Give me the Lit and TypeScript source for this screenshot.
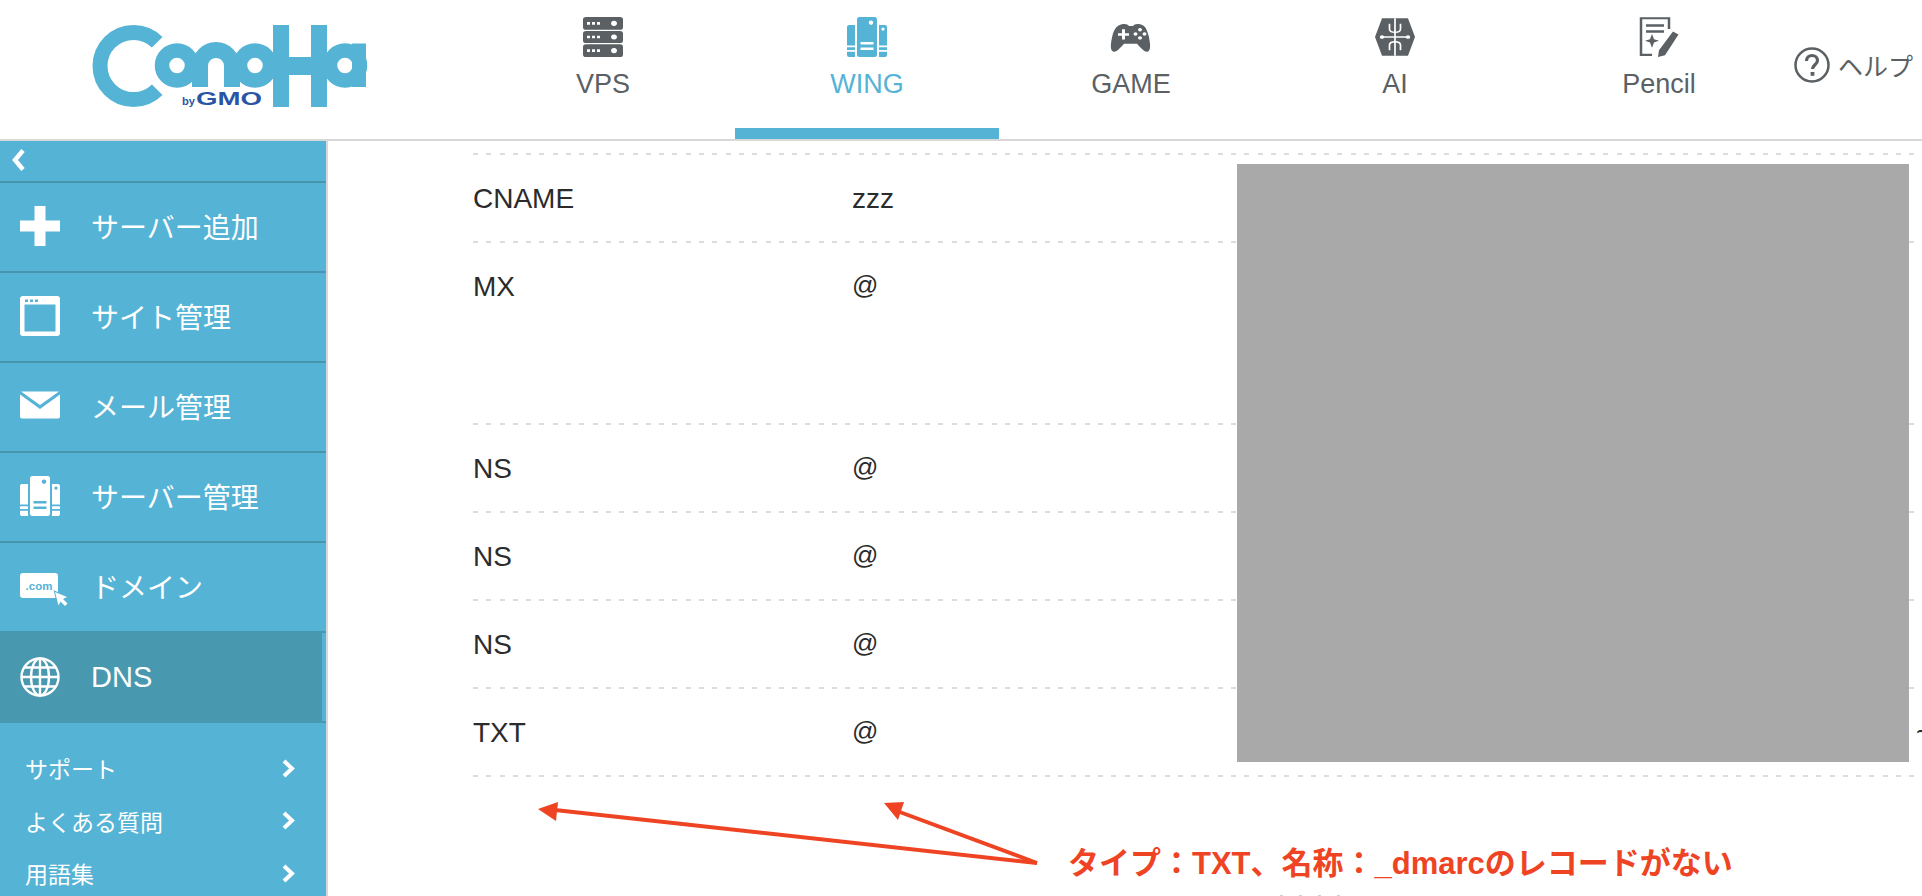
import { LitElement, html, css, svg } from "lit";
import { customElement } from "lit/decorators.js";

const serverIcon = svg`<path fill-rule="evenodd" d="M12.500 0h15a2.500 2.500 0 0 1 2.500 2.500v35a2.500 2.500 0 0 1-2.500 2.500h-15a2.500 2.500 0 0 1-2.500-2.500v-35a2.500 2.500 0 0 1 2.500-2.500zM24 3.500a2.200 2.200 0 1 0 .01 0zM13.500 25v2.400h13V25zM13.500 30.500v2.400h13v-2.400z"/><path fill-rule="evenodd" d="M2 8h6v32H2a2 2 0 0 1-2-2V10a2 2 0 0 1 2-2zM0 28.500v1.800h8v-1.800zM0 33v1.800h8V33z"/><path fill-rule="evenodd" d="M32 8h6a2 2 0 0 1 2 2v28a2 2 0 0 1-2 2h-6zM36 10.500a1.600 1.600 0 1 0 .01 0zM32 28.500v1.800h8v-1.800zM32 33v1.800h8V33z"/>`;

const tabIcons: Record<string, unknown> = {
  VPS: svg`<g fill="currentColor" fill-rule="evenodd"><path d="M3 0h34a3 3 0 0 1 3 3v9a3 3 0 0 1-3 3H3a3 3 0 0 1-3-3V3a3 3 0 0 1 3-3zM4 6v3h3V6zM9 6v3h3V6zM14 6v3h3V6zM31 4.500a3 3 0 1 0 .01 0z"/><path d="M3 16.500h34a3 3 0 0 1 3 3v8a3 3 0 0 1-3 3H3a3 3 0 0 1-3-3v-8a3 3 0 0 1 3-3zM4 22v3h3v-3zM9 22v3h3v-3zM14 22v3h3v-3zM31 20.500a3 3 0 1 0 .01 0z"/><path d="M3 32h34a3 3 0 0 1 3 3v9a3 3 0 0 1-3 3H3a3 3 0 0 1-3-3v-9a3 3 0 0 1 3-3zM4 38v3h3v-3zM9 38v3h3v-3zM14 38v3h3v-3zM31 36.500a3 3 0 1 0 .01 0z"/></g>`,
  WING: svg`<g fill="currentColor" transform="scale(1 1.175)">${serverIcon}</g>`,
  GAME: svg`<path transform="translate(0 3.500)" fill="currentColor" fill-rule="evenodd" d="M11 5c3-1 6 0 7 2h4c1-2 4-3 7-2 5 1 7 6 8.500 13 1.500 8 3 17-.5 19-3 2-8-5-11-9H13c-3 4-8 11-11 9-3.500-2-2-11-.5-19C3 11 6 6 11 5zM11 11v4.500H7v3h4V23h3v-4.500h4v-3h-4V11zM29 9.500a2 2 0 1 0 .01 0zM29 19a2 2 0 1 0 .01 0zM24.500 14.500a2 2 0 1 0 .01 0zM33.500 14.500a2 2 0 1 0 .01 0z"/>`,
  AI: svg`<path fill="currentColor" d="M7 1.500H33L40 23.500 33 45.500H7L0 23.500z"/><g fill="none" stroke="#fff" stroke-width="1.700"><path d="M20 1.500V45.500"/><path d="M8 23.500H32M14.500 8v6c0 3 2 4 5.500 4s5.500-1 5.500-4V8M14.500 39v-6c0-3 2-4 5.500-4s5.500 1 5.500 4v6"/></g><g fill="#fff"><circle cx="7" cy="23.500" r="2.200"/><circle cx="33" cy="23.500" r="2.200"/></g>`,
  Pencil: svg`<g fill="none" stroke="currentColor"><path stroke-width="2.500" d="M30 14V1.500H2v43h11"/><path stroke-width="3" d="M7 10h18M7 17h18"/></g><path fill="currentColor" d="M13 20l2 6 5 2-5 2-2 6-2-6-5-2 5-2zM34 17l5.500 3.500L26 45l-7 2 1-8z"/>`,
};

const tabs = ["VPS", "WING", "GAME", "AI", "Pencil"];

const navIcons: Record<string, unknown> = {
  add: svg`<path fill="#fff" d="M14.500 0h11v14.500H40v11H25.500V40h-11V25.500H0v-11h14.500z"/>`,
  site: svg`<path fill="#fff" fill-rule="evenodd" d="M3 0h34a3 3 0 0 1 3 3v34a3 3 0 0 1-3 3H3a3 3 0 0 1-3-3V3a3 3 0 0 1 3-3zM4.500 8.500v27h31v-27zM5 3.500V6h3V3.500zM10 3.500V6h3V3.500zM15 3.500V6h3V3.500z"/>`,
  mail: svg`<path fill="#fff" d="M1 5.500h38L20 19zM0 8.500l20 14.500L40 8.500V30.500a2 2 0 0 1-2 2H2a2 2 0 0 1-2-2z"/>`,
  server: svg`<g fill="#fff">${serverIcon}</g>`,
  domain: svg`<path fill="#fff" d="M3 7h32a3 3 0 0 1 3 3v19a3 3 0 0 1-3 3H3a3 3 0 0 1-3-3V10a3 3 0 0 1 3-3z"/><text x="19" y="24" text-anchor="middle" class="com">.com</text><path fill="#fff" stroke="#55b3d5" stroke-width="2" paint-order="stroke" d="M35 26l12 5-4 2 4.500 4.500-2.500 2.500-4.500-4.500-2 4z"/>`,
  dns: svg`<g fill="none" stroke="#fff" stroke-width="2.400"><circle cx="20" cy="20" r="18.500"/><ellipse cx="20" cy="20" rx="9" ry="18.500"/><path d="M20 1.500v37M1.500 20h37M4 10.500h32M4 29.500h32"/></g>`,
};

const navItems = [
  { key: "add", label: "サーバー追加" },
  { key: "site", label: "サイト管理" },
  { key: "mail", label: "メール管理" },
  { key: "server", label: "サーバー管理" },
  { key: "domain", label: "ドメイン" },
  { key: "dns", label: "DNS", active: true },
];

const links = ["サポート", "よくある質問", "用語集"];

const rows = [
  { type: "CNAME", name: "zzz", cls: "r88" },
  { type: "MX", name: "@", cls: "r182" },
  { type: "NS", name: "@", cls: "r88" },
  { type: "NS", name: "@", cls: "r88" },
  { type: "NS", name: "@", cls: "r88" },
  { type: "TXT", name: "@", cls: "r88", extra: "~" },
];

@customElement("app-root")
export class AppRoot extends LitElement {
  static styles = css`
    :host {
      display: block;
      width: 1922px;
      height: 896px;
      overflow: hidden;
      background: #fff;
      font-family: "Liberation Sans", "Noto Sans CJK JP", sans-serif;
      color: #2b2b2b;
    }
    .header {
      display: flex;
      height: 139px;
      border-bottom: 2px solid #d8d8d8;
      background: #fff;
    }
    .logo-wrap {
      width: 471px;
      flex: none;
    }
    .logo {
      display: block;
      margin: 25px 0 0 92px;
    }
    .tab {
      width: 264px;
      flex: none;
      box-sizing: border-box;
      height: 139px;
      padding-top: 17px;
      display: flex;
      flex-direction: column;
      align-items: center;
      color: #5a6063;
      font-size: 27px;
      line-height: 31px;
    }
    .tab svg {
      display: block;
      height: 40px;
      width: 40px;
      margin-bottom: 12px;
      overflow: visible;
    }
    .tab.active {
      color: #55b3d5;
      border-bottom: 11px solid #55b3d5;
    }
    .help {
      flex: none;
      display: flex;
      align-items: center;
      gap: 8px;
      height: 36px;
      margin: 47px 0 0 3px;
      color: #5a6063;
      font-size: 25px;
      white-space: nowrap;
    }
    .help svg {
      display: block;
      width: 36px;
      height: 36px;
    }
    .main {
      display: flex;
      height: 755px;
    }
    .side {
      flex: none;
      width: 326px;
      height: 755px;
      background: #55b3d5;
      border-right: 2px solid #d8d8dc;
      color: #fff;
      overflow: hidden;
    }
    .collapse {
      height: 38px;
      border-bottom: 2px solid #4795ae;
      display: flex;
      align-items: center;
      padding: 0 0 2px 12px;
    }
    .collapse svg {
      display: block;
      width: 13px;
      height: 22px;
    }
    .nav {
      box-sizing: border-box;
      height: 90px;
      border-bottom: 2px solid #4795ae;
      display: flex;
      align-items: center;
      padding-left: 20px;
      font-size: 28px;
    }
    .nav svg {
      flex: none;
      display: block;
      width: 40px;
      height: 40px;
      margin: -3px 31px 0 0;
      overflow: visible;
    }
    .nav span {
      margin-top: -2px;
    }
    .nav .com {
      font: bold 11.500px "Liberation Sans", sans-serif;
      fill: #55b3d5;
    }
    .nav.active {
      background: #4898b0;
      height: 92px;
      border-bottom: 0;
      position: relative;
      font-size: 29px;
    }
    .nav.active svg {
      margin-top: 0;
    }
    .nav.active span {
      margin-top: 0;
    }
    .nav.active::after {
      content: "";
      position: absolute;
      right: 0;
      top: 2px;
      bottom: 2px;
      width: 4px;
      background: #55b3d5;
    }
    .nav.plain {
      height: 88px;
      border-bottom: 0;
    }
    .links {
      padding-top: 19px;
    }
    .link {
      height: 52.500px;
      display: flex;
      align-items: center;
      justify-content: space-between;
      padding: 0 31px 0 25px;
      font-size: 23px;
    }
    .link svg {
      display: block;
      width: 13px;
      height: 19px;
    }
    .content {
      flex: 1;
      min-width: 0;
      position: relative;
      overflow: hidden;
      padding: 12px 0 0 145px;
    }
    .rule {
      height: 2px;
      background: repeating-linear-gradient(90deg, #dcdcdc 0 5px, transparent 5px 13.300px);
    }
    .row {
      display: flex;
      box-sizing: border-box;
      padding-top: 29px;
      font-size: 28px;
      line-height: 30px;
      background: repeating-linear-gradient(90deg, #dcdcdc 0 5px, transparent 5px 13.300px) left bottom / 100% 2px no-repeat;
    }
    .r88 { height: 88px; }
    .r182 { height: 182px; }
    .type { width: 379px; flex: none; }
    .name { width: 1064px; flex: none; }
    .name.at {
      font-size: 26px;
      margin-top: -2px;
    }
    .extra { flex: none; }
    .mask {
      position: absolute;
      left: 909px;
      top: 23px;
      width: 672px;
      height: 598px;
      background: #a9a9a9;
    }
    .arrows {
      position: absolute;
      left: 0;
      top: 0;
      width: 1594px;
      height: 755px;
    }
    .note {
      position: absolute;
      left: 740px;
      top: 706px;
      color: #ee4423;
      font-size: 31px;
      font-weight: bold;
      line-height: 34px;
      white-space: nowrap;
    }
    .peek {
      position: absolute;
      left: 952px;
      top: 754px;
      width: 60px;
      height: 1px;
      background: repeating-linear-gradient(90deg, #cfcfcf 0 3px, transparent 3px 19px);
    }
  `;

  render() {
    return html`
      <div class="header">
        <div class="logo-wrap">
          <svg class="logo" width="276" height="84" viewBox="92 25 276 84">
            <g fill="none" stroke="#55b3d5">
              <path stroke-width="15" d="M157.200 42.300A33.500 33.500 0 1 0 157.200 89.700"/>
              <circle cx="177" cy="65.500" r="15" stroke-width="14.500"/>
              <circle cx="255" cy="65.500" r="15" stroke-width="14.500"/>
              <path stroke-width="16" d="M200 87V66A16 16 0 0 1 232 66V87"/>
              <circle cx="345" cy="65.500" r="15" stroke-width="14.500"/>
            </g>
            <g fill="#55b3d5">
              <rect x="273" y="25" width="16" height="82"/>
              <rect x="311" y="25" width="16" height="82"/>
              <rect x="285" y="57" width="30" height="18"/>
              <rect x="352" y="43.500" width="14" height="43.500"/>
            </g>
            <g fill="#2a55a5" font-family="Liberation Sans" font-weight="bold">
              <text x="182" y="105" font-size="11" textLength="13" lengthAdjust="spacingAndGlyphs">by</text>
              <text x="196" y="105" font-size="18" textLength="66" lengthAdjust="spacingAndGlyphs">GMO</text>
            </g>
          </svg>
        </div>
        ${tabs.map(
          (t) => html`<div class="tab ${t === "WING" ? "active" : ""}">
            <svg viewBox="0 0 40 47" preserveAspectRatio="none">${tabIcons[t]}</svg>
            <span>${t}</span>
          </div>`
        )}
        <div class="help">
          <svg viewBox="0 0 36 36">
            <circle cx="18" cy="18" r="16.500" fill="none" stroke="#5a6063" stroke-width="2.500"/>
            <path d="M12.500 14c0-3.500 2.500-5.500 5.500-5.500s5.500 2 5.500 5c0 4-5 4.500-5 8.500" fill="none" stroke="#5a6063" stroke-width="3.200"/>
            <rect x="16.600" y="25" width="3.800" height="3.800" fill="#5a6063"/>
          </svg>
          <span>ヘルプ</span>
        </div>
      </div>
      <div class="main">
        <div class="side">
          <div class="collapse">
            <svg viewBox="0 0 13 22"><path d="M11 1.500L3 11l8 9.500" fill="none" stroke="#fff" stroke-width="4.500"/></svg>
          </div>
          ${navItems.map(
            (n) => html`<div class="nav ${n.active ? "active" : ""} ${n.key === "domain" ? "plain" : ""}">
              <svg viewBox="0 0 40 40">${navIcons[n.key]}</svg>
              <span>${n.label}</span>
            </div>`
          )}
          <div class="links">
            ${links.map(
              (l) => html`<div class="link">
                <span>${l}</span>
                <svg viewBox="0 0 13 19"><path d="M2 2l8 7.500L2 17" fill="none" stroke="#fff" stroke-width="4"/></svg>
              </div>`
            )}
          </div>
        </div>
        <div class="content">
          <div class="rule"></div>
          ${rows.map(
            (r) => html`<div class="row ${r.cls}">
              <div class="type">${r.type}</div>
              <div class="name ${r.name === "@" ? "at" : ""}">${r.name}</div>
              ${r.extra ? html`<div class="extra">${r.extra}</div>` : ""}
            </div>`
          )}
          <div class="mask"></div>
          <svg class="arrows" viewBox="328 141 1594 755">
            <g fill="none" stroke="#ee4423" stroke-width="4">
              <path d="M1037 863L555 810"/>
              <path d="M1037 863L897 811"/>
            </g>
            <g fill="#ee4423">
              <path d="M538 809L558 802L556 821z"/>
              <path d="M884 803L904 802L898 820z"/>
            </g>
          </svg>
          <div class="note">タイプ：TXT、名称：_dmarcのレコードがない</div>
          <div class="peek"></div>
        </div>
      </div>
    `;
  }
}
